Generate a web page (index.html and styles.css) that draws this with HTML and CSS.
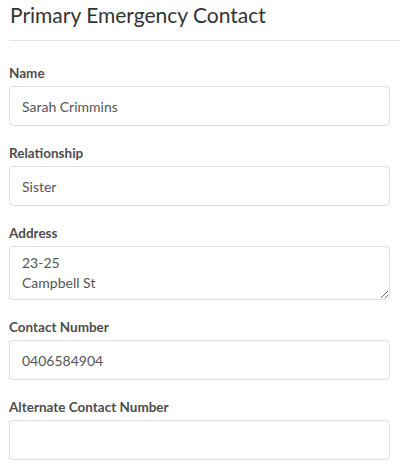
FILE: index.html
```html
<!DOCTYPE html>
<html lang="en">
<head>
  <meta charset="UTF-8">
  <title>Primary Emergency Contact</title>
  <meta name="viewport" content="width=device-width, initial-scale=1.0">
  <link rel="stylesheet" href="styles.css">
</head>
<body>
  <div class="contact-panel">
    <h2 class="panel-title">Primary Emergency Contact</h2>
    <form class="contact-form">
      <div class="form-group">
        <label for="name">Name</label>
        <input id="name" type="text" value="Sarah Crimmins">
      </div>
      <div class="form-group">
        <label for="relationship">Relationship</label>
        <input id="relationship" type="text" value="Sister">
      </div>
      <div class="form-group">
        <label for="address">Address</label>
        <textarea id="address">23-25
Campbell St</textarea>
      </div>
      <div class="form-group">
        <label for="phone">Contact Number</label>
        <input id="phone" type="text" value="0406584904">
      </div>
      <div class="form-group">
        <label for="altPhone">Alternate Contact Number</label>
        <input id="altPhone" type="text" value="">
      </div>
    </form>
  </div>
</body>
</html>
```

FILE: styles.css
```css
body {
  background: #fff;
  font-family: 'Lato', 'Open Sans', Arial, sans-serif;
  margin: 0;
  padding: 0;
}
.contact-panel {
  padding: 0 10px 0 9px;
}
.panel-title {
  margin: 0 -10px 0 0;
  padding: 0 0 10px 1px;
  font-size: 21px;
  line-height: 30px;
  font-weight: 400;
  color: #333;
  border-bottom: 1px solid #e5e5e5;
}
.contact-form {
  padding-top: 25px;
}
.form-group {
  margin-bottom: 20px;
}
.form-group label {
  display: block;
  font-size: 13.5px;
  line-height: 14px;
  font-weight: 700;
  color: #4d4d4d;
  margin-bottom: 6px;
}
.form-group input,
.form-group textarea {
  display: block;
  width: 100%;
  box-sizing: border-box;
  border: 1px solid #ddd;
  border-radius: 4px;
  font-family: inherit;
  font-size: 14px;
  color: #555;
  background: #fff;
  outline: none;
  margin: 0;
}
.form-group input {
  height: 40px;
  padding: 0 12px;
}
.form-group textarea {
  height: 54px;
  padding: 6px 12px;
  line-height: 20px;
}
```
